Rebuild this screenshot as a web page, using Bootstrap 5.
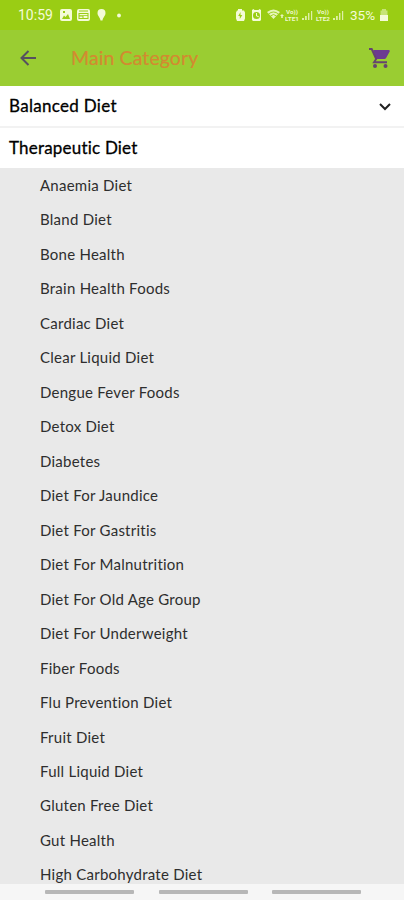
<!DOCTYPE html>
<html lang="en">
<head>
<meta charset="utf-8">
<meta name="viewport" content="width=device-width, initial-scale=1">
<title>Main Category</title>
<link href="https://cdn.jsdelivr.net/npm/bootstrap@5.3.0/dist/css/bootstrap.min.css" rel="stylesheet">
<style>
body{font-family:Lato,"Open Sans",sans-serif;background:#e9e9e9;color:#111}
.screen{height:900px}
.status{height:30px;background:#9acd14;color:#f4fbd8;font-family:Roboto,sans-serif;font-size:14px;line-height:30px;padding:0 15px 0 18px}
.status svg{fill:#f4fbd8;flex:none}
.status-time{width:42px}
.status-charge{width:29px;font-size:13.5px}
.appbar{height:55.5px;background:#9acd32;padding:0 12px 0 19px}
.appbar h1{font-size:19.5px;color:#d38a30;letter-spacing:.1px;margin:0 0 0 34px;line-height:24px;white-space:nowrap;-webkit-text-stroke:.2px #d38a30}
.group-row{height:40.5px;padding:0 12px 0 9px;font-size:17px;letter-spacing:.2px;color:#000;-webkit-text-stroke:.3px #000}
.group-first{height:42px;border-bottom:2.5px solid #f2f2f2}
.group-first span{letter-spacing:.3px}
.diet-item{height:34.47px;line-height:34.47px;padding-left:40px;font-size:15px;color:#2e2e2e;letter-spacing:.25px;white-space:nowrap}
.gesture{height:16px;background:#f6f6f6;padding:5.500px 43px 0 45px}
.gesture span{width:89px;height:4px;background:#b7b7b7;border-radius:1px}
</style>
<script src="https://cdn.jsdelivr.net/npm/bootstrap@5.3.0/dist/js/bootstrap.bundle.min.js"></script>
</head>
<body>
<div class="screen d-flex flex-column overflow-hidden">
  <div class="status d-flex align-items-center justify-content-between flex-shrink-0">
    <div class="d-flex align-items-center">
      <span class="status-time">10:59</span>
      <svg width="62" height="14" viewBox="0 0 62 14">
        <path fill-rule="evenodd" d="M2 1h8q2 0 2 2v8q0 2-2 2H2q-2 0-2-2V3q0-2 2-2zM2 11h8L8 6 5.500 9 4 7.500zM3 3v2h2V3z"/>
        <path fill-rule="evenodd" d="M19 1h9q2 0 2 2v8q0 2-2 2H19q-2 0-2-2V3q0-2 2-2zM19 2.500v1h9v-1zM18.500 5v6h10V5zM19.500 6h8v1.200h-8zM19.500 8.500h3v1.500h-3zM23.500 8h4v2h-4z"/>
        <path d="M41.500 1a4 4 0 0 1 4 4c0 3-2.500 4-3 7.500h-2c-.5-3.500-3-4.500-3-7.500a4 4 0 0 1 4-4z"/>
        <circle cx="59" cy="7.500" r="1.900"/>
      </svg>
    </div>
    <div class="d-flex align-items-center">
      <svg width="115" height="14" viewBox="0 0 115 14">
        <path fill-rule="evenodd" d="M3 1h4v1.500h2l1 2v6L9 13H2l-1-2.500v-6l1-2h1zM5.500 4 3.200 8h1.600v3L7.300 7H5.500z"/>
        <path fill-rule="evenodd" d="M17 2l1.500-1 1 1h4l1-1L26 2v10l-1 1h-7l-1-1zM21.500 4a3.500 3.500 0 1 0 0 7 3.500 3.500 0 0 0 0-7zM21 5h1v2.500l2 1-.5.8-2.500-1.300z"/>
        <path opacity=".85" d="M32 4q6.500-5 13 0l-6.500 7zM45 8l2-2 2 2h-1.200v2h-1.600V8z"/>
        <path fill="none" stroke="#9acd14" stroke-width=".9" d="M33.500 6q5-4 10 0M35.500 8q3-3 6 0"/>
        <g font-family="Roboto,sans-serif" font-size="5.500" font-weight="700" opacity=".95">
          <text x="51" y="6.200" textLength="12" lengthAdjust="spacingAndGlyphs">Vo))</text>
          <text x="50" y="13" textLength="14" lengthAdjust="spacingAndGlyphs">LTE1</text>
          <text x="82" y="6.200" textLength="12" lengthAdjust="spacingAndGlyphs">Vo))</text>
          <text x="81" y="13" textLength="14" lengthAdjust="spacingAndGlyphs">LTE2</text>
        </g>
        <path opacity=".75" d="M67 12v-2h2v2zM70 12V8h1.800v4zM73 12V5h1.400v7zM76 12V3h1.200v9zM98 12v-2h2v2zM101 12V8h1.800v4zM104 12V5h1.400v7zM107 12V3h1.200v9z"/>
      </svg>
      <span class="status-charge">35%</span>
      <svg width="10" height="14" viewBox="0 0 10 14"><path opacity=".5" d="M3 1h4v1.500h1.500V7h-7V2.500H3z"/><path d="M1 7h8v6H1z"/></svg>
    </div>
  </div>
  <header class="appbar d-flex align-items-center flex-shrink-0">
    <svg width="18" height="18" viewBox="0 0 18 18" fill="none" stroke="#56505f" stroke-width="2"><path d="M17 9H3M9.500 2 2.500 9l7 7"/></svg>
    <h1 class="fw-normal">Main Category</h1>
    <svg class="ms-auto" width="24" height="24" viewBox="0 0 24 24"><path fill="#6c3b91" d="M5.200 4h15.600a1 1 0 0 1 .9 1.500l-3.600 6.500q-.6 1-1.700 1H8z"/><path fill="none" stroke="#65446f" stroke-width="1.900" d="M1 3h2.700l4.500 10L6 16.300h13"/><circle cx="7" cy="20" r="2" fill="#65446f"/><circle cx="17.500" cy="20" r="2" fill="#65446f"/></svg>
  </header>
  <div class="group-row group-first bg-white d-flex align-items-center justify-content-between flex-shrink-0">
    <span>Balanced Diet</span>
    <svg width="14" height="10" viewBox="0 0 14 10" fill="none" stroke="#222" stroke-width="2"><path d="m2 3 5 5 5-5"/></svg>
  </div>
  <div class="group-row bg-white d-flex align-items-center flex-shrink-0"><span>Therapeutic Diet</span></div>
  <ul class="diet-list list-unstyled mb-0 flex-grow-1 overflow-hidden">
    <li class="diet-item">Anaemia Diet</li>
    <li class="diet-item">Bland Diet</li>
    <li class="diet-item">Bone Health</li>
    <li class="diet-item">Brain Health Foods</li>
    <li class="diet-item">Cardiac Diet</li>
    <li class="diet-item">Clear Liquid Diet</li>
    <li class="diet-item">Dengue Fever Foods</li>
    <li class="diet-item">Detox Diet</li>
    <li class="diet-item">Diabetes</li>
    <li class="diet-item">Diet For Jaundice</li>
    <li class="diet-item">Diet For Gastritis</li>
    <li class="diet-item">Diet For Malnutrition</li>
    <li class="diet-item">Diet For Old Age Group</li>
    <li class="diet-item">Diet For Underweight</li>
    <li class="diet-item">Fiber Foods</li>
    <li class="diet-item">Flu Prevention Diet</li>
    <li class="diet-item">Fruit Diet</li>
    <li class="diet-item">Full Liquid Diet</li>
    <li class="diet-item">Gluten Free Diet</li>
    <li class="diet-item">Gut Health</li>
    <li class="diet-item">High Carbohydrate Diet</li>
  </ul>
  <div class="gesture d-flex justify-content-between flex-shrink-0"><span></span><span></span><span></span></div>
</div>
</body>
</html>
